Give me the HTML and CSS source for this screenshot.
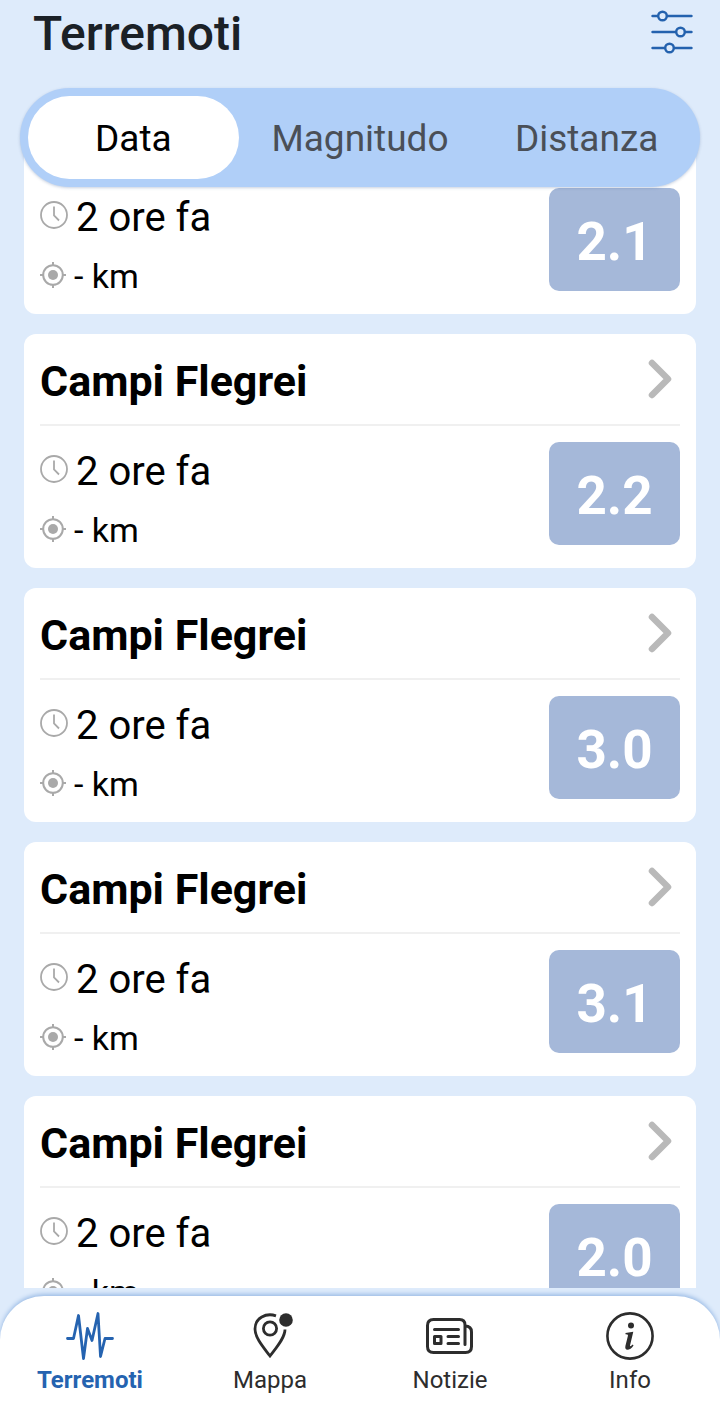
FILE: index.html
```html
<!DOCTYPE html>
<html lang="it">
<head>
  <meta charset="UTF-8" />
  <meta name="viewport" content="width=device-width, initial-scale=1.0" />
  <title>Terremoti</title>
  <link rel="stylesheet" href="styles.css">
</head>
<body>
  <!-- shared icons -->
  <svg class="sprite" aria-hidden="true">
    <symbol id="clock" viewBox="0 0 28 28">
      <circle cx="14" cy="14" r="13" fill="none" stroke="currentColor" stroke-width="1.8" />
      <path d="M14 5.500V14.500L19 19.500" fill="none" stroke="currentColor" stroke-width="1.8" />
    </symbol>
    <symbol id="target" viewBox="0 0 26 26">
      <circle cx="13" cy="13" r="9.800" fill="none" stroke="currentColor" stroke-width="2" />
      <circle cx="13" cy="13" r="5" fill="currentColor" />
      <path d="M13 0v4M13 22v4M0 13h4M22 13h4" stroke="currentColor" stroke-width="2" />
    </symbol>
    <symbol id="chevron" viewBox="0 0 24 40">
      <path d="M4 4L20 20L4 36" fill="none" stroke="currentColor" stroke-width="6.5" stroke-linecap="round" stroke-linejoin="round" />
    </symbol>
  </svg>

  <header class="header">
    <h1>Terremoti</h1>
    <button class="filter" type="button" aria-label="Filtri">
      <svg width="42" height="44" viewBox="0 0 42 44" fill="none" stroke="currentColor" stroke-width="2.4" stroke-linecap="round">
        <path d="M1.500 6H7M16 6H40.500M1.500 22H25M34 22H40.500M1.500 38H14M23 38H40.500" />
        <circle cx="11.500" cy="6" r="4.300" />
        <circle cx="29.500" cy="22" r="4.300" />
        <circle cx="18.500" cy="38" r="4.300" />
      </svg>
    </button>
  </header>

  <div class="tabs">
    <button class="tab active" type="button">Data</button>
    <button class="tab" type="button">Magnitudo</button>
    <button class="tab" type="button">Distanza</button>
  </div>

  <main class="feed" id="feed">
    <article class="card">
      <div class="card-head"><h2>Campi Flegrei</h2><svg class="chevron"><use href="#chevron" /></svg></div>
      <div class="card-body">
        <div class="details">
          <p class="time"><svg class="clock"><use href="#clock" /></svg>2 ore fa</p>
          <p class="distance"><svg class="target"><use href="#target" /></svg>- km</p>
        </div>
        <div class="magnitude">2.1</div>
      </div>
    </article>
    <article class="card">
      <div class="card-head"><h2>Campi Flegrei</h2><svg class="chevron"><use href="#chevron" /></svg></div>
      <div class="card-body">
        <div class="details">
          <p class="time"><svg class="clock"><use href="#clock" /></svg>2 ore fa</p>
          <p class="distance"><svg class="target"><use href="#target" /></svg>- km</p>
        </div>
        <div class="magnitude">2.2</div>
      </div>
    </article>
    <article class="card">
      <div class="card-head"><h2>Campi Flegrei</h2><svg class="chevron"><use href="#chevron" /></svg></div>
      <div class="card-body">
        <div class="details">
          <p class="time"><svg class="clock"><use href="#clock" /></svg>2 ore fa</p>
          <p class="distance"><svg class="target"><use href="#target" /></svg>- km</p>
        </div>
        <div class="magnitude">3.0</div>
      </div>
    </article>
    <article class="card">
      <div class="card-head"><h2>Campi Flegrei</h2><svg class="chevron"><use href="#chevron" /></svg></div>
      <div class="card-body">
        <div class="details">
          <p class="time"><svg class="clock"><use href="#clock" /></svg>2 ore fa</p>
          <p class="distance"><svg class="target"><use href="#target" /></svg>- km</p>
        </div>
        <div class="magnitude">3.1</div>
      </div>
    </article>
    <article class="card">
      <div class="card-head"><h2>Campi Flegrei</h2><svg class="chevron"><use href="#chevron" /></svg></div>
      <div class="card-body">
        <div class="details">
          <p class="time"><svg class="clock"><use href="#clock" /></svg>2 ore fa</p>
          <p class="distance"><svg class="target"><use href="#target" /></svg>- km</p>
        </div>
        <div class="magnitude">2.0</div>
      </div>
    </article>
  </main>

  <nav class="navbar">
    <a class="nav-item active" href="#terremoti">
      <svg viewBox="0 0 48 48" fill="none" stroke="currentColor" stroke-width="2.8" stroke-linecap="round" stroke-linejoin="round">
        <path d="M1.500 26.500H7.500L12.500 3.500L17.500 46.500L21.500 16.500L26 28.500L32 1.500L34.500 44.500L39 26.500H46.500" />
      </svg>
      <span>Terremoti</span>
    </a>
    <a class="nav-item" href="#mappa">
      <svg viewBox="0 0 48 48" fill="none" stroke="currentColor" stroke-width="2.8">
        <path d="M30 3.800C20 0.500 9 6 9 17C9 26 18 36 24 44C30 36 39 26 39 17.500" />
        <circle cx="24" cy="16.500" r="6.600" />
        <circle cx="40" cy="8" r="6.800" fill="currentColor" stroke="none" />
      </svg>
      <span>Mappa</span>
    </a>
    <a class="nav-item" href="#notizie">
      <svg viewBox="0 0 48 48" fill="none" stroke="currentColor" stroke-width="3" stroke-linecap="round" stroke-linejoin="round">
        <path d="M39 32.500V13Q39 7.500 33.500 7.500H7.500Q1.500 7.500 1.500 13.500V34.500Q1.500 40.500 7.500 40.500H39.500Q45.500 40.500 45.500 34.500V20Q45.500 14 39 14" />
        <path d="M8.500 17.500H32.500M22 24.500H32.500M22 31.500H32.500M8.500 24.500H15V31.500H8.500Z" />
      </svg>
      <span>Notizie</span>
    </a>
    <a class="nav-item" href="#info">
      <svg viewBox="0 0 48 48" fill="none" stroke="currentColor">
        <circle cx="24" cy="24" r="22.600" stroke-width="2.600" />
        <circle cx="25" cy="13.500" r="3" fill="currentColor" stroke="none" />
        <path d="M19.500 21L27.300 19.800L24 33.500Q23.700 35.500 26.800 32.600L27.500 33.500Q24.500 37.800 21.500 37.800Q18.700 37.500 19.400 34L22 23.500Q22.200 22.200 19.500 22.200Z" fill="currentColor" stroke="none" />
      </svg>
      <span>Info</span>
    </a>
  </nav>

  <script>
    // start part way down the list
    document.getElementById("feed").scrollTop = 120;
  </script>
</body>
</html>
```
FILE: styles.css
```css
* {
  box-sizing: border-box;
}
body {
  margin: 0;
  height: 100vh;
  display: flex;
  flex-direction: column;
  font-family: Roboto, "Liberation Sans", sans-serif;
  background: #deebfb;
  color: #000;
}
h1, h2, p {
  margin: 0;
}
button {
  font-family: inherit;
  border: none;
  padding: 0;
  background: none;
  cursor: pointer;
}
svg {
  display: block;
  flex: none;
}
.sprite {
  position: absolute;
  width: 0;
  height: 0;
}
.header {
  display: flex;
  justify-content: space-between;
  align-items: flex-start;
  height: 88px;
  padding: 6px 27px 0 33px;
}
.header h1 {
  font-size: 48px;
  line-height: 56px;
  font-weight: 500;
  color: #1b2127;
}
.filter {
  margin-top: 4px;
  color: #2462ae;
}
.tabs {
  position: relative;
  z-index: 1;
  display: grid;
  grid-template-columns: repeat(3, 1fr);
  height: 99px;
  margin: 0 20px -49px;
  border-radius: 50px;
  background: #b0cff8;
  box-shadow: 0 1px 3px rgba(70, 100, 150, 0.3);
}
.tab {
  margin: 8px;
  padding-top: 2px;
  border-radius: 42px;
  font-size: 37px;
  color: #4a4f57;
}
.tab.active {
  background: #fff;
  color: #000;
}
.feed {
  flex: 1;
  min-height: 0;
  overflow-y: auto;
  scrollbar-width: none;
  padding: 62px 24px 24px;
}
.card {
  padding: 0 16px 23px;
  border-radius: 12px;
  background: #fff;
}
.card + .card {
  margin-top: 20px;
}
.card-head {
  display: flex;
  justify-content: space-between;
  align-items: center;
  height: 92px;
  padding-right: 8px;
  border-bottom: 2px solid #f0f0f0;
}
.card-head h2 {
  padding-top: 4px;
  font-size: 43px;
  line-height: 52px;
  font-weight: 700;
}
.chevron {
  width: 24px;
  height: 40px;
  color: #b9b9b9;
}
.card-body {
  display: flex;
  justify-content: space-between;
  padding-top: 16px;
}
.time, .distance {
  display: flex;
  align-items: center;
  gap: 8px;
}
.time {
  height: 58px;
  font-size: 40px;
}
.distance {
  height: 60px;
  font-size: 34px;
}
.clock {
  width: 28px;
  height: 28px;
  margin-bottom: 4px;
  color: #a9a9a9;
}
.target {
  width: 26px;
  height: 26px;
  margin-bottom: 2px;
  color: #a9a9a9;
}
.details {
  height: 103px;
}
.magnitude {
  display: flex;
  align-items: center;
  justify-content: center;
  width: 131px;
  height: 103px;
  padding-top: 4px;
  border-radius: 10px;
  background: #a5b8d9;
  color: #fff;
  font-size: 53px;
  font-weight: 700;
}
.navbar {
  position: relative;
  display: grid;
  grid-template-columns: repeat(4, 1fr);
  height: 108px;
  margin-top: 8px;
  border-radius: 44px 44px 0 0;
  background: #fff;
  box-shadow: 0 -2px 4px #9dbde6;
}
.nav-item {
  display: flex;
  flex-direction: column;
  align-items: center;
  padding-top: 16px;
  font-size: 24px;
  line-height: 28px;
  text-decoration: none;
  color: #2d2d2d;
}
.nav-item svg {
  width: 48px;
  height: 48px;
  margin-bottom: 6px;
}
.nav-item.active {
  color: #2563b0;
  font-weight: 700;
}
```
